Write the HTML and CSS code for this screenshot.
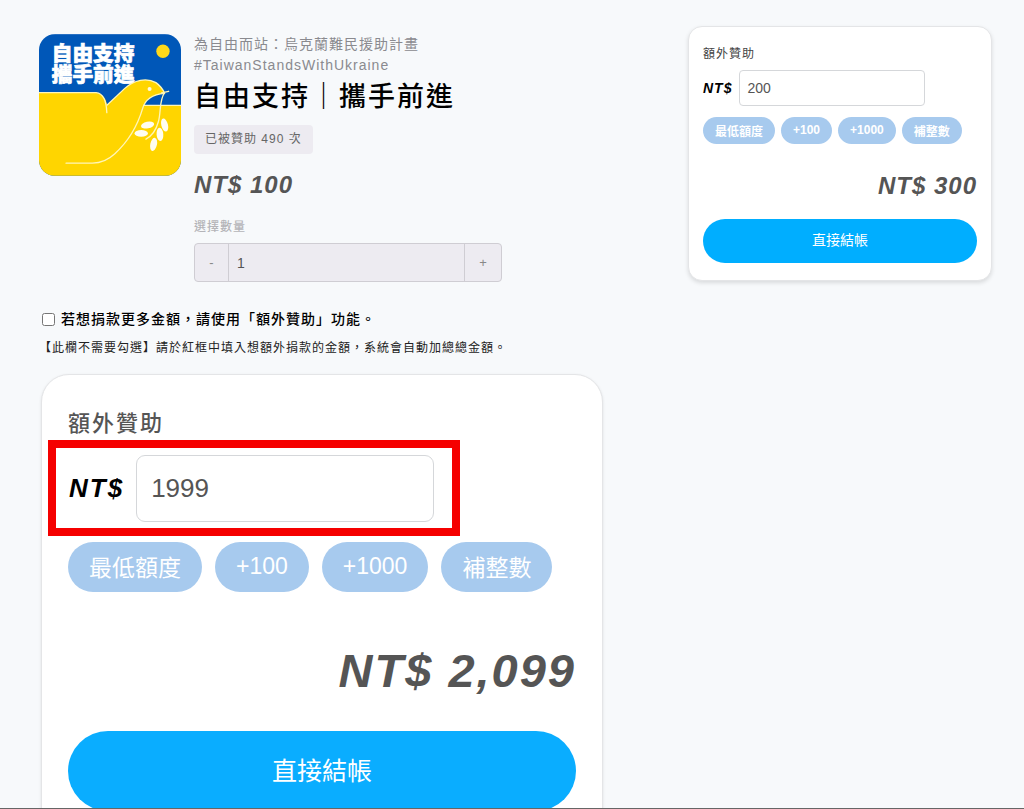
FILE: index.html
```
<!DOCTYPE html>
<html lang="zh-Hant">
<head>
  <meta charset="UTF-8" />
  <meta name="viewport" content="width=device-width, initial-scale=1" />
  <title>自由支持｜攜手前進</title>
  <link rel="stylesheet" href="styles.css">
</head>
<body>
  <div class="page">

    <main class="project">
      <!-- Project summary -->
      <section class="summary">
        <svg class="cover" viewBox="27 27 425 424" role="img" aria-label="自由支持 攜手前進">
          <rect x="27" y="27" width="425" height="424" fill="#0057b8"/>
          <path d="M27 202H198Q224 204 231 239L283 190C312 163 350 157 377 172Q394 184 403 204C377 207 350 217 340 240H452V451H27Z" fill="#ffd500"/>
          <circle cx="398" cy="78" r="20" fill="#ffd91a"/>
          <text class="cover-text"><tspan x="65" y="106">自由支持</tspan><tspan x="65" y="171">攜手前進</tspan></text>
          <path d="M240 232L283 190C312 163 350 157 377 172L340 240Z" fill="#ffd500"/>
          <g fill="none" stroke="#fff6b8" stroke-width="4" stroke-linecap="round" stroke-linejoin="round">
            <path d="M28 202H198Q228 205 230 262"/>
            <path d="M231 239L283 190C312 163 350 157 377 172Q394 184 403 204C368 207 345 219 337 250C321 304 291 351 254 385Q224 413 187 413H108"/>
            <path d="M340 240H451"/>
            <path d="M394 203L415 198M403 202C386 225 393 260 384 290Q374 327 347 341"/>
          </g>
          <circle cx="358" cy="191" r="6" fill="#fffbe0"/>
          <g fill="#fffdf0">
            <ellipse cx="352" cy="299" rx="20" ry="10" transform="rotate(-12 352 299)"/>
            <ellipse cx="333" cy="324" rx="20" ry="10"/>
            <ellipse cx="403" cy="299" rx="10" ry="20" transform="rotate(-14 403 299)"/>
            <ellipse cx="389" cy="327" rx="10" ry="20" transform="rotate(-4 389 327)"/>
            <ellipse cx="370" cy="357" rx="10" ry="20" transform="rotate(12 370 357)"/>
          </g>
        </svg>

        <div class="info">
          <p class="campaign">為自由而站：烏克蘭難民援助計畫<br>#TaiwanStandsWithUkraine</p>
          <h1>自由支持｜攜手前進</h1>
          <span class="badge">已被贊助 490 次</span>
          <p class="price">NT$ 100</p>
          <label class="qty-label" for="qty">選擇數量</label>
          <div class="qty">
            <button type="button">-</button>
            <input type="text" id="qty" value="1">
            <button type="button">+</button>
          </div>
        </div>
      </section>

      <div class="option">
        <input type="checkbox" id="more">
        <label for="more">若想捐款更多金額，請使用「額外贊助」功能。</label>
      </div>
      <p class="note">【此欄不需要勾選】請於紅框中填入想額外捐款的金額，系統會自動加總總金額。</p>

      <!-- Example of the extra donation box -->
      <section class="card card-large">
        <label class="card-label" for="extraSample">額外贊助</label>
        <div class="amount highlight">
          <span class="currency">NT$</span>
          <input type="text" id="extraSample" value="1999">
        </div>
        <div class="pills">
          <button type="button">最低額度</button>
          <button type="button">+100</button>
          <button type="button">+1000</button>
          <button type="button">補整數</button>
        </div>
        <p class="total">NT$ 2,099</p>
        <button type="button" class="checkout">直接結帳</button>
      </section>
    </main>

    <!-- Checkout -->
    <aside class="card">
      <label class="card-label" for="extra">額外贊助</label>
      <div class="amount">
        <span class="currency">NT$</span>
        <input type="text" id="extra" value="200">
      </div>
      <div class="pills">
        <button type="button">最低額度</button>
        <button type="button">+100</button>
        <button type="button">+1000</button>
        <button type="button">補整數</button>
      </div>
      <p class="total">NT$ 300</p>
      <button type="button" class="checkout">直接結帳</button>
    </aside>

  </div>
</body>
</html>
```
FILE: styles.css
```
* {
  box-sizing: border-box;
}

body {
  margin: 0;
  background: #f7f9fb;
  color: #000;
  font-family: "Liberation Sans", "Noto Sans CJK TC", sans-serif;
  letter-spacing: 1px;
}

p, h1 {
  margin: 0;
}

button, input {
  margin: 0;
  font-family: inherit;
}

button {
  cursor: pointer;
}

.page {
  display: grid;
  grid-template-columns: minmax(0, 564px) 304px;
  justify-content: space-between;
  align-items: start;
  height: 100vh;
  padding: 26px 32px 0 39px;
  border-bottom: 1px solid #666;
  overflow: hidden;
}

.project {
  padding-top: 8px;
}

/* Summary */
.summary {
  display: flex;
  align-items: flex-start;
  gap: 13px;
}

.cover {
  flex: none;
  width: 142px;
  height: 142px;
  border-radius: 16px;
}

.cover-text {
  font-family: "Noto Sans CJK TC", sans-serif;
  font-size: 62px;
  font-weight: 900;
  letter-spacing: 0;
  fill: #fff;
  stroke: #fff;
  stroke-width: 2px;
}

.info {
  display: flex;
  flex-direction: column;
  align-items: flex-start;
}

.campaign {
  color: #8a8a8f;
  font-size: 14px;
  line-height: 21px;
}

h1 {
  font-size: 27px;
  font-weight: 500;
  line-height: 42px;
  letter-spacing: 2px;
}

.badge {
  margin-top: 7px;
  padding: 0 11px;
  border-radius: 4px;
  background: #edebf1;
  color: #666;
  font-size: 12px;
  line-height: 29px;
}

.price {
  margin-top: 16px;
  color: #555;
  font-size: 24px;
  font-style: italic;
  font-weight: bold;
  line-height: 30px;
}

.qty-label {
  margin-top: 18px;
  color: #b4b4b8;
  font-size: 12px;
  font-weight: 500;
  line-height: 18px;
}

.qty {
  display: flex;
  width: 308px;
  height: 39px;
  margin-top: 7px;
  border: 1px solid #cfcdd3;
  border-radius: 4px;
  background: #edebf1;
}

.qty button {
  width: 36px;
  padding: 0;
  border: none;
  background: none;
  color: #888;
  font-size: 13px;
}

.qty button:first-child {
  width: 33px;
}

.qty input {
  flex: 1;
  min-width: 0;
  padding: 0 8px;
  border: solid #cfcdd3;
  border-width: 0 1px;
  background: none;
  color: #555;
  font-size: 14px;
}

/* Option */
.option {
  display: flex;
  align-items: center;
  gap: 6px;
  margin-top: 27px;
  font-size: 14px;
  font-weight: 500;
  line-height: 20px;
}

.option input {
  width: 13px;
  height: 13px;
  margin-left: 3px;
}

.note {
  margin-top: 9px;
  color: #222;
  font-size: 12px;
  line-height: 20px;
}

/* Donation cards */
.card {
  display: flex;
  flex-direction: column;
  padding: 18px 14px 17px;
  border: 1px solid #e4e5e7;
  border-radius: 14px;
  background: #fff;
  box-shadow: 0 2px 4px rgba(0, 0, 0, 0.12);
}

.card-label {
  color: #444;
  font-size: 12px;
  line-height: 18px;
}

.amount {
  display: flex;
  align-items: center;
  gap: 7px;
  margin-top: 7px;
}

.currency {
  font-size: 14px;
  font-style: italic;
  font-weight: bold;
}

.amount input {
  width: 186px;
  height: 36px;
  padding: 0 7px;
  border: 1px solid #d5d7da;
  border-radius: 4px;
  background: #fff;
  color: #555;
  font-size: 14px;
}

.pills {
  display: flex;
  gap: 6px;
  margin-top: 11px;
}

.pills button {
  height: 27px;
  padding: 0 12px 1px;
  border: none;
  border-radius: 40px;
  background: #a7caee;
  color: #fff;
  font-size: 12px;
  font-weight: bold;
  white-space: nowrap;
}

.total {
  margin-top: 27px;
  color: #555;
  font-size: 24px;
  font-style: italic;
  font-weight: bold;
  line-height: 30px;
  text-align: right;
}

.checkout {
  height: 44px;
  margin-top: 18px;
  padding: 0 0 4px;
  border: none;
  border-radius: 40px;
  background: #00aeff;
  color: #fff;
  font-size: 14px;
}

.card-large {
  margin: 16px 0 0 2px;
  padding: 33px 26px;
  border-radius: 28px;
  box-shadow: 0 1px 3px rgba(0, 0, 0, 0.1);
}

.card-large .card-label {
  color: #555;
  font-size: 22px;
  font-weight: 500;
  line-height: 32px;
  letter-spacing: 2px;
}

/* Red frame round the amount field */
.highlight {
  align-self: flex-start;
  gap: 12px;
  margin: 0 0 0 -20px;
  padding: 7px 18px 6px 13px;
  border: 8px solid #f50000;
}

.card-large .currency {
  font-size: 26px;
  letter-spacing: 2px;
}

.card-large .amount input {
  width: 298px;
  height: 67px;
  padding: 0 14px;
  border-radius: 9px;
  font-size: 26px;
  letter-spacing: 0;
}

.card-large .pills {
  gap: 13px;
  margin-top: 6px;
}

.card-large .pills button {
  height: 50px;
  padding: 0 21px 2px;
  font-size: 23px;
  font-weight: normal;
}

.card-large .total {
  margin-top: 51px;
  font-size: 47px;
  line-height: 56px;
  letter-spacing: 2px;
}

.card-large .checkout {
  height: 80px;
  margin-top: 32px;
  background: #0aadff;
  font-size: 25px;
}
```
